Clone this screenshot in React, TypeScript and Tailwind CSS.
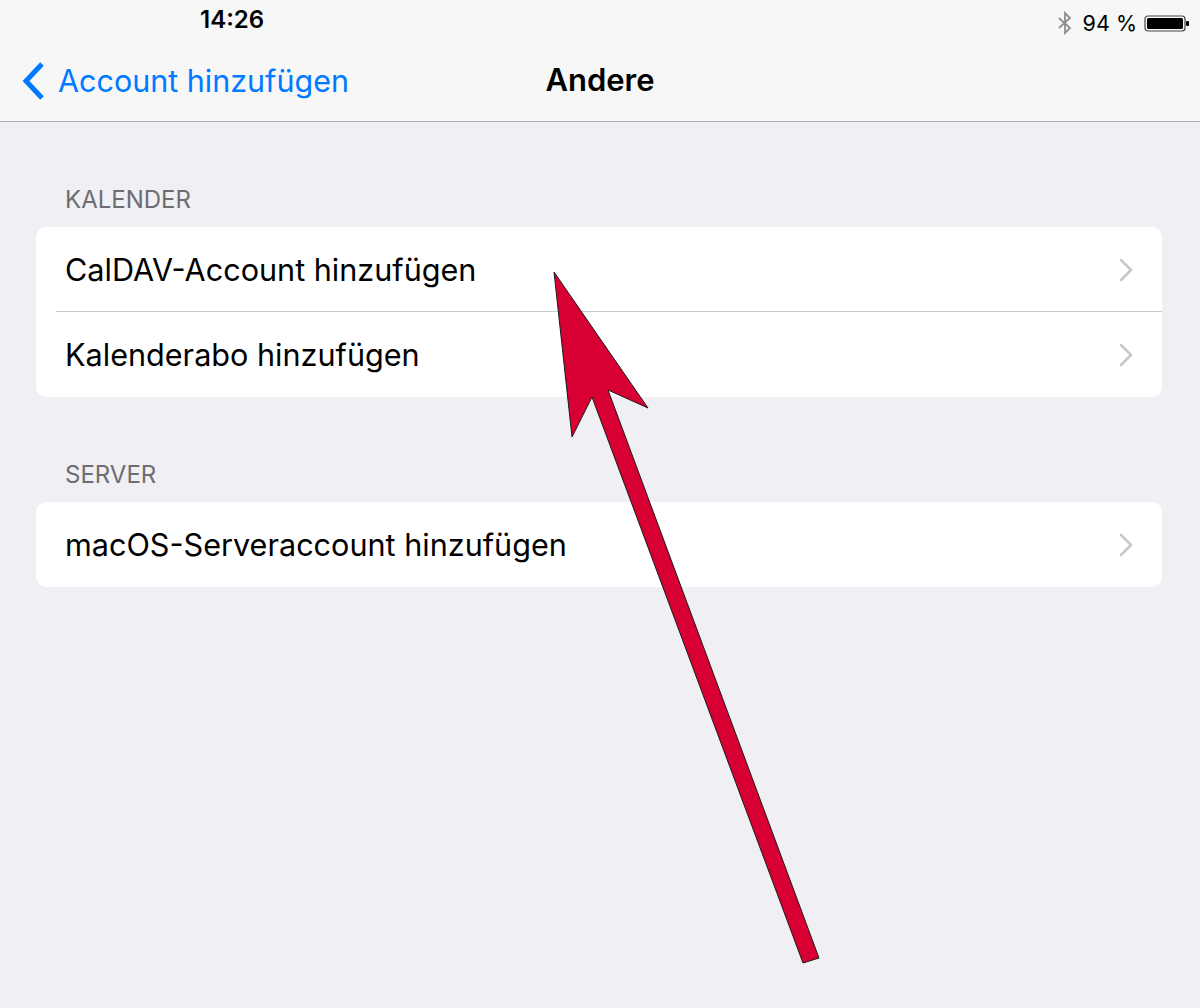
import React from "react";

const Chevron = () => (
  <svg width="14" height="24" viewBox="0 0 14 24" className="shrink-0">
    <path d="M2 2 L12 12 L2 22" fill="none" stroke="#c7c7cc" strokeWidth="2.6" strokeLinecap="round" strokeLinejoin="round" />
  </svg>
);

const Row = ({ label, last, h }: { label: string; last?: boolean; h: string }) => (
  <div className={`relative flex ${h} items-center pl-[29px] pr-[29px]`}>
    <span className="flex-1 text-[30.6px] text-black">{label}</span>
    <Chevron />
    {!last && <div className="absolute bottom-0 left-[20px] right-0 h-px bg-[#c8c7cc]" />}
  </div>
);

export default function App() {
  return (
    <div
      className="relative h-[1008px] w-[1200px] overflow-hidden bg-[#efeff4]"
      style={{ fontFamily: "Inter, Roboto, 'Noto Sans', sans-serif" }}
    >
      <div className="h-[122px] border-b border-[#b2b2b2] bg-[#f7f7f7]">
        <div className="relative h-[40px]">
          <span className="absolute left-[200px] top-[5px] text-[24px] leading-[30px] font-semibold text-black">14:26</span>
          <div className="absolute right-[10px] top-[7px] flex items-center gap-[6px]">
            <svg width="16" height="24" viewBox="0 0 16 24">
              <path d="M2 7 L13 17 L8 22 L8 2 L13 7 L2 17" fill="none" stroke="#8e8e93" strokeWidth="1.8" strokeLinejoin="miter" />
            </svg>
            <span className="text-[21.5px] text-black ml-[4px]">94 %</span>
            <svg width="46" height="20" viewBox="0 0 46 20" className="ml-[1px]">
              <rect x="1" y="3" width="40" height="15" rx="3" fill="none" stroke="#444" strokeWidth="1.2" />
              <rect x="3" y="5" width="36" height="11" rx="1.5" fill="#000" />
              <rect x="42" y="8" width="3" height="5" rx="1" fill="#000" />
            </svg>
          </div>
        </div>
        <div className="relative flex h-[81px] items-center">
          <div className="flex items-center pl-[22px]">
            <svg width="24" height="40" viewBox="0 0 24 40">
              <path d="M20 3 L4 20 L20 37" fill="none" stroke="#007aff" strokeWidth="5" strokeLinejoin="miter" />
            </svg>
            <span className="ml-[12px] text-[30.5px] text-[#007aff]">Account hinzufügen</span>
          </div>
          <span className="absolute left-0 right-0 text-center text-[31px] font-semibold text-black pointer-events-none">
            Andere
          </span>
        </div>
      </div>

      <div className="pl-[36px] pr-[38px]">
        <div className="pl-[29px] pt-[66px] pb-[15px] text-[24px] text-[#6d6d72] leading-none">KALENDER</div>
        <div className="overflow-hidden rounded-[10px] bg-white">
          <Row label="CalDAV-Account hinzufügen" h="h-[85px]" />
          <Row label="Kalenderabo hinzufügen" h="h-[85px]" last />
        </div>
        <div className="pl-[29px] pt-[66px] pb-[15px] text-[24px] text-[#6d6d72] leading-none">SERVER</div>
        <div className="overflow-hidden rounded-[10px] bg-white">
          <Row label="macOS-Serveraccount hinzufügen" h="h-[85px]" last />
        </div>
      </div>

      <svg className="pointer-events-none absolute left-0 top-0" width="1200" height="1008">
        <polygon
          points="554,272 648,408 608,390 819,958 803,963 592,397 572,437"
          fill="#d80032"
          stroke="#1a1a1a"
          strokeWidth="1"
          strokeLinejoin="miter"
        />
      </svg>
    </div>
  );
}
